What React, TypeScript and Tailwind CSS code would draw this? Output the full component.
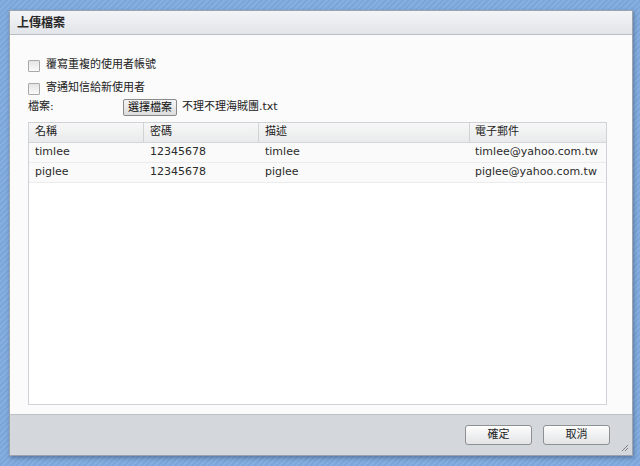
import React from "react";

const rows = [
  { name: "timlee", pass: "12345678", desc: "timlee", mail: "timlee@yahoo.com.tw" },
  { name: "piglee", pass: "12345678", desc: "piglee", mail: "piglee@yahoo.com.tw" },
];

const font = "font-['DejaVu_Sans','Noto_Sans_CJK_TC',sans-serif]";

function Check({ label }: { label: string }) {
  return (
    <div className="flex items-center h-[17px]">
      <span className="w-[12px] h-[12px] border border-[#a9a9a9] bg-gradient-to-b from-[#e4e4e4] to-[#fafafa] rounded-[1px]" />
      <span className="ml-[6px] text-[11px] text-[#222]">{label}</span>
    </div>
  );
}

function Btn({ children }: { children: React.ReactNode }) {
  return (
    <button className="w-[67px] h-[20px] rounded-[3px] border border-[#8e9092] bg-gradient-to-b from-[#fdfdfd] to-[#e3e4e6] text-[11px] text-[#222] shadow-[inset_0_1px_0_#fff]">
      {children}
    </button>
  );
}

export default function App() {
  return (
    <div
      className={`w-[640px] h-[466px] overflow-hidden pt-[10px] pl-[9px] bg-[#80a9dc] bg-[repeating-linear-gradient(135deg,#7ca6da_0px,#7ca6da_2px,#86aede_2px,#86aede_4px)] ${font}`}
    >
      <div className="w-[624px] h-[446px] flex flex-col border border-[#9aa3ad] shadow-[1px_2px_4px_rgba(40,60,90,0.45)]">
        <div className="h-[24px] flex items-center pl-[7px] bg-gradient-to-b from-[#f3f4f6] to-[#e2e5e9] border-b border-[#b9bec4] text-[12px] font-bold text-[#2a2a2a]">
          上傳檔案
        </div>
        <div className="flex-1 flex flex-col bg-[#fbfbfb] pl-[18px] pr-[25px] pb-[9px] border-b border-[#bcc1c7]">
          <div className="mt-[22px]">
            <Check label="覆寫重複的使用者帳號" />
          </div>
          <div className="mt-[6px]">
            <Check label="寄通知信給新使用者" />
          </div>
          <div className="flex items-center h-[19px] mt-[1px] text-[11px] text-[#222]">
            <span className="w-[95px]">檔案:</span>
            <button className="h-[17px] px-[4px] rounded-[2px] border border-[#8a8a8a] bg-gradient-to-b from-[#f6f6f6] to-[#dcdcdc] text-[11px] text-[#111] leading-none">
              選擇檔案
            </button>
            <span className="ml-[5px]">不理不理海賊團.txt</span>
          </div>
          <div className="mt-[5px] flex-1 border border-[#cfd2d6] bg-white flex flex-col">
            <div className="flex h-[20px] bg-gradient-to-b from-[#f7f7f7] to-[#e9eaeb] border-b border-[#d4d6d9] text-[11px] text-[#222]">
              <div className="w-[115px] pl-[6px] flex items-center border-r border-[#d0d2d5]">名稱</div>
              <div className="w-[115px] pl-[6px] flex items-center border-r border-[#d0d2d5]">密碼</div>
              <div className="w-[211px] pl-[6px] flex items-center border-r border-[#d0d2d5]">描述</div>
              <div className="flex-1 pl-[5px] flex items-center">電子郵件</div>
            </div>
            {rows.map((r) => (
              <div key={r.name} className="flex h-[20px] bg-[#fafafa] border-b border-[#ececec] text-[11px] text-[#2b2b2b]">
                <div className="w-[115px] pl-[6px] flex items-center">{r.name}</div>
                <div className="w-[115px] pl-[6px] flex items-center">{r.pass}</div>
                <div className="w-[211px] pl-[6px] flex items-center">{r.desc}</div>
                <div className="flex-1 pl-[5px] flex items-center">{r.mail}</div>
              </div>
            ))}
          </div>
        </div>
        <div className="h-[40px] relative flex items-center justify-end gap-[11px] pr-[22px] bg-[#d4d8dd]">
          <Btn>確定</Btn>
          <Btn>取消</Btn>
          <svg className="absolute right-[3px] bottom-[3px]" width="8" height="8" viewBox="0 0 8 8">
            <path d="M1 7 L7 1 M4 7 L7 4" stroke="#7d8288" strokeWidth="1" />
          </svg>
        </div>
      </div>
    </div>
  );
}
